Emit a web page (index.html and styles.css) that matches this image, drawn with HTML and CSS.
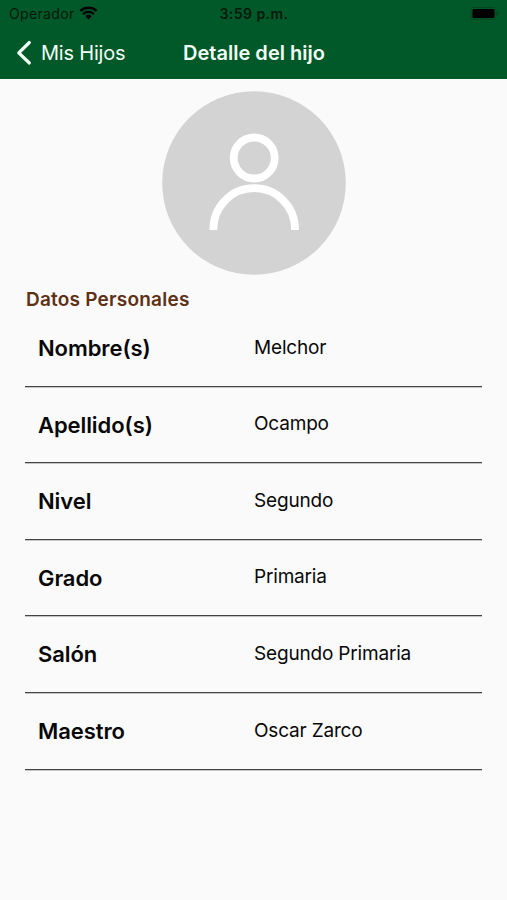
FILE: index.html
```html
<!DOCTYPE html>
<html lang="es">
<head>
<meta charset="utf-8">
<title>Detalle del hijo</title>
<link rel="stylesheet" href="styles.css">
</head>
<body>
<header class="header">
  <div class="status">
    <div class="carrier"><span class="carrier-name">Operador</span>
      <svg class="wifi" viewBox="0 0 20 15"><path d="M10 14.5 6.7 11a4.9 4.9 0 0 1 6.6 0Z"/><path class="arc" d="M4.2 8.6a8.5 8.5 0 0 1 11.6 0M1.3 5.3a12.8 12.8 0 0 1 17.4 0"/></svg>
    </div>
    <span class="time">3:59 p.m.</span>
    <svg class="battery" viewBox="0 0 29 13"><rect class="shell" x="1" y=".5" width="25" height="12" rx="3"/><rect x="2.5" y="2" width="22" height="9" rx="1.5"/><path class="nub" d="M27 4.5q1.5.5 1.5 2t-1.5 2Z"/></svg>
  </div>
  <nav class="nav">
    <a class="back"><svg class="chevron" viewBox="0 0 16 26"><path d="M13.3 2.5 2.8 12.8l10.5 10.2"/></svg><span class="back-label">Mis Hijos</span></a>
    <h1 class="title">Detalle del hijo</h1>
    <span></span>
  </nav>
</header>
<main class="content">
  <svg class="avatar" viewBox="0 0 184 184"><circle class="disc" cx="92" cy="92" r="91.8"/><circle class="person" cx="92.2" cy="67" r="20.5"/><path class="person" d="M51.4 139v-1a40.8 40.8 0 0 1 81.6 0v1"/></svg>
  <h2 class="section">Datos Personales</h2>
  <dl class="list">
    <div class="row"><dt>Nombre(s)</dt><dd>Melchor</dd></div>
    <div class="row"><dt>Apellido(s)</dt><dd>Ocampo</dd></div>
    <div class="row"><dt>Nivel</dt><dd>Segundo</dd></div>
    <div class="row"><dt>Grado</dt><dd>Primaria</dd></div>
    <div class="row"><dt>Salón</dt><dd>Segundo Primaria</dd></div>
    <div class="row"><dt>Maestro</dt><dd>Oscar Zarco</dd></div>
  </dl>
</main>
</body>
</html>
```
FILE: styles.css
```css
* { box-sizing: border-box; }
body { margin: 0; min-height: 900px; background: #fafafa; color: #080808; font-family: Inter, "Liberation Sans", sans-serif; }
.header { height: 79px; background: #015829; }
.status { display: grid; grid-template-columns: 1fr auto 1fr; align-items: center; height: 27px; padding: 0 8px 0 9px; font-size: 14px; color: #001a0b; }
.carrier { display: flex; align-items: center; gap: 4px; letter-spacing: .35px; }
.wifi { width: 19px; height: 14px; margin-top: -1px; }
.arc { fill: none; stroke: #000; stroke-width: 2.5; }
.time { font-weight: 600; letter-spacing: .45px; }
.battery { width: 29px; height: 13px; justify-self: end; }
.shell { fill: none; stroke: #04461f; }
.nub { fill: #04461f; }
.nav { display: grid; grid-template-columns: 1fr auto 1fr; align-items: center; height: 51px; padding: 0 15px 0 16px; color: #f3fff6; }
.back { display: flex; align-items: center; gap: 9px; font-size: 20px; letter-spacing: -.2px; }
.chevron { width: 16px; height: 26px; fill: none; stroke: #f3fff6; stroke-width: 3.2; stroke-linecap: round; stroke-linejoin: round; }
.title { margin: 0; font-size: 20px; font-weight: 600; letter-spacing: .02px; }
.content { padding: 12px 25px 0; }
.avatar { display: block; width: 184px; height: 184px; margin: 0 auto; }
.disc { fill: #d3d3d3; }
.person { fill: none; stroke: #fff; stroke-width: 7.8; }
.section { margin: 12px 0 0 1px; height: 23px; line-height: 26px; font-size: 19px; font-weight: 600; letter-spacing: .22px; color: #5e3014; }
.list { margin: 0; }
.row { display: grid; grid-template-columns: 216px 1fr; height: 76.6px; padding: 0 0 0 13px; border-bottom: 1px solid #444; box-shadow: 0 1px #c4c4c4; align-items: center; }
dt { padding-top: .6px; font-size: 22px; font-weight: 600; letter-spacing: -.08px; }
dd { margin: 0; padding-bottom: 1.2px; font-size: 19px; letter-spacing: -.18px; }
```
